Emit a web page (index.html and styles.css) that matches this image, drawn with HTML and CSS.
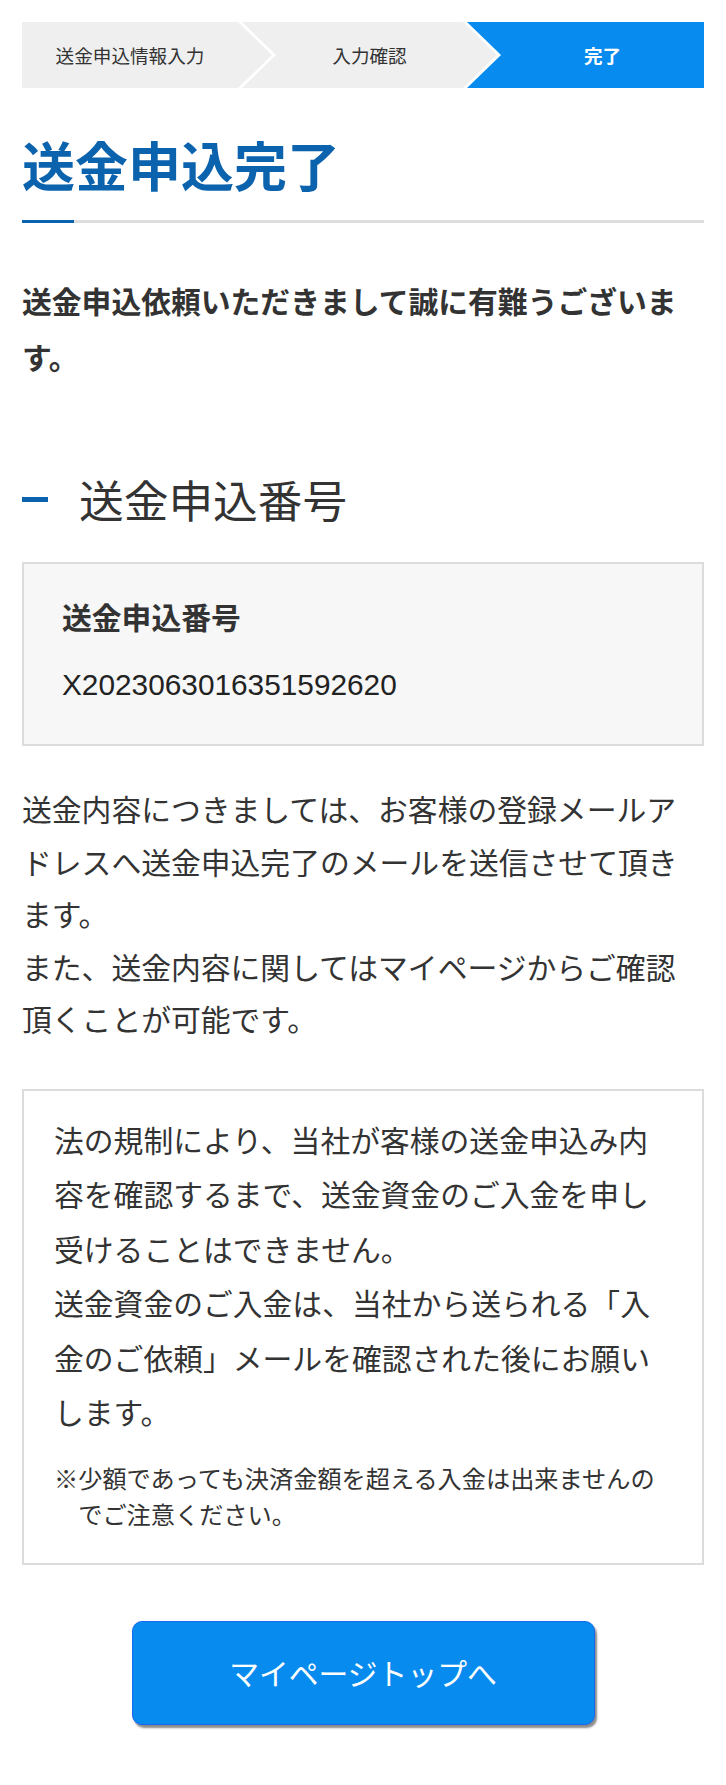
FILE: index.html
```html
<!DOCTYPE html>
<html lang="ja">
<head>
<meta charset="utf-8">
<title>送金申込完了</title>
<link rel="stylesheet" href="styles.css">
</head>
<body>
<div class="page">
  <ol class="steps">
    <li class="step step-first">送金申込情報入力</li>
    <li class="step step-mid">入力確認</li>
    <li class="step step-last is-current">完了</li>
  </ol>

  <h1 class="title">送金申込完了</h1>
  <div class="title-rule"></div>

  <p class="lead">送金申込依頼いただきまして誠に有難うございます。</p>

  <h2 class="section-head"><span class="section-dash"></span>送金申込番号</h2>

  <div class="number-box">
    <div class="number-label">送金申込番号</div>
    <div class="number-value">X2023063016351592620</div>
  </div>

  <p class="body-text">送金内容につきましては、お客様の登録メールアドレスへ送金申込完了のメールを送信させて頂きます。<br>また、送金内容に関してはマイページからご確認頂くことが可能です。</p>

  <div class="notice">
    <p class="notice-text">法の規制により、当社が客様の送金申込み内容を確認するまで、送金資金のご入金を申し受けることはできません。<br>送金資金のご入金は、当社から送られる「入金のご依頼」メールを確認された後にお願いします。</p>
    <p class="notice-note">※少額であっても決済金額を超える入金は出来ませんのでご注意ください。</p>
  </div>

  <div class="actions">
    <a class="btn-primary" href="#">マイページトップへ</a>
  </div>
</div>
</body>
</html>
```

FILE: styles.css
```css
html, body {
  margin: 0;
  padding: 0;
  background: #ffffff;
}

body {
  font-family: "Noto Sans CJK JP", "Noto Sans", sans-serif;
  color: #333333;
}

.page {
  padding: 22px 22px 60px 22px;
}

/* steps */
.steps {
  display: flex;
  list-style: none;
  margin: 0;
  padding: 0;
  height: 66px;
}

.step {
  display: flex;
  align-items: center;
  justify-content: center;
  height: 66px;
  background: #efefef;
  font-size: 18.6px;
  line-height: 1;
  color: #333333;
  box-sizing: border-box;
}

.step-first {
  width: 250px;
  padding-right: 34px;
  clip-path: polygon(0 0, calc(100% - 34px) 0, 100% 50%, calc(100% - 34px) 100%, 0 100%);
}

.step-mid {
  width: 255px;
  margin-left: -30px;
  padding: 0 34px;
  clip-path: polygon(0 0, calc(100% - 34px) 0, 100% 50%, calc(100% - 34px) 100%, 0 100%, 34px 50%);
}

.step-last {
  flex: 1;
  margin-left: -30px;
  padding-left: 34px;
  clip-path: polygon(0 0, 100% 0, 100% 100%, 0 100%, 34px 50%);
}

.step.is-current {
  background: #088bee;
  color: #ffffff;
  font-weight: 700;
}

/* title */
.title {
  margin: 40px 0 0;
  padding-bottom: 20px;
  font-size: 53px;
  line-height: 72px;
  font-weight: 700;
  color: #0b63ae;
  letter-spacing: 0;
}

.title-rule {
  height: 3px;
  background: linear-gradient(to right, #0b63ae 0, #0b63ae 52px, #dddddd 52px, #dddddd 100%);
}

.lead {
  margin: 49px 0 0;
  font-size: 29.8px;
  line-height: 56px;
  font-weight: 700;
  color: #333333;
}

/* section heading */
.section-head {
  display: flex;
  align-items: center;
  margin: 84px 0 0;
  font-size: 44.7px;
  line-height: 62px;
  font-weight: 400;
  color: #333333;
}

.section-dash {
  width: 26px;
  height: 5px;
  background: #0b63ae;
  margin-right: 31px;
  flex: none;
}

/* number box */
.number-box {
  margin-top: 32px;
  border: 2px solid #dcdcdc;
  background: #f7f7f7;
  padding: 30px 38px 37px;
}

.number-label {
  font-size: 29.8px;
  line-height: 44px;
  font-weight: 700;
  color: #333333;
}

.number-value {
  margin-top: 25px;
  font-family: "Liberation Sans", Arial, sans-serif;
  font-size: 29.8px;
  line-height: 44px;
  color: #222222;
}

/* body text */
.body-text {
  margin: 36px 0 0;
  font-size: 29.8px;
  line-height: 52.5px;
  color: #333333;
}

/* notice */
.notice {
  margin-top: 44px;
  border: 2px solid #dcdcdc;
  padding: 21px 30px 31px;
}

.notice-text {
  margin: 0;
  font-size: 29.8px;
  line-height: 54.6px;
  color: #333333;
}

.notice-note {
  margin: 21px 0 0;
  font-size: 24.2px;
  line-height: 36px;
  padding-left: 1em;
  text-indent: -1em;
  color: #333333;
}

/* button */
.actions {
  display: flex;
  justify-content: center;
  margin-top: 56px;
}

.btn-primary {
  display: flex;
  align-items: center;
  justify-content: center;
  width: 463px;
  height: 104px;
  box-sizing: border-box;
  background: #088bee;
  border: 1px solid #1568f2;
  border-radius: 10px;
  box-shadow: 2px 3px 2px rgba(90, 90, 90, 0.7);
  color: #ffffff;
  font-size: 29.8px;
  line-height: 1;
  text-decoration: none;
}
```
